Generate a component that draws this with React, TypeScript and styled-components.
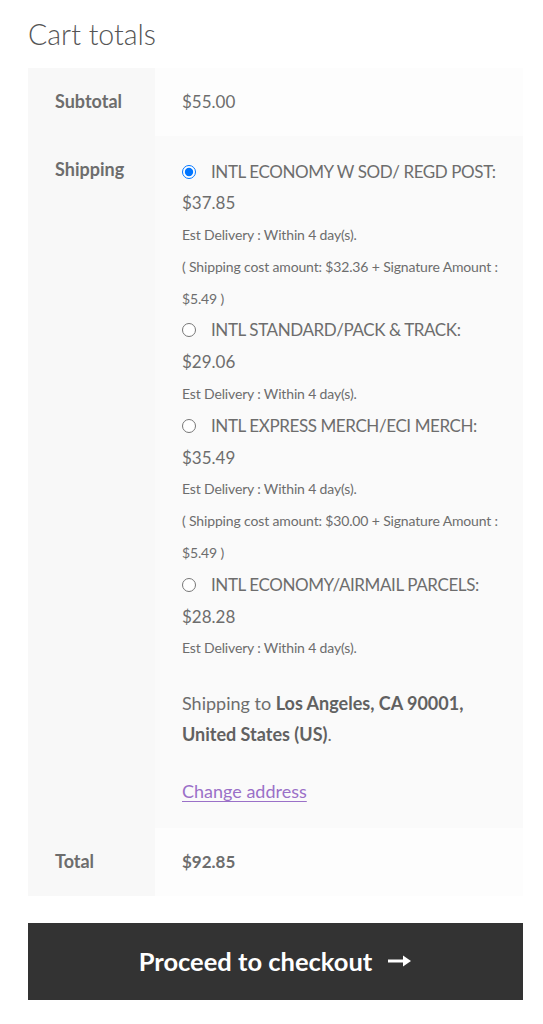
import React, { FC } from "react";
import styled, { createGlobalStyle } from "styled-components";

const GlobalStyle = createGlobalStyle`
  html, body {
    margin: 0;
    padding: 0;
    background: #fff;
  }
  body {
    font-family: Lato, "Noto Sans", "Liberation Sans", sans-serif;
    color: #6d6d6d;
  }
`;

const Wrapper = styled.div`
  width: 495px;
  padding: 15px 0 0 28px;
`;

const Heading = styled.h2`
  margin: 0 0 15px;
  font-size: 28.5px;
  font-weight: 300;
  line-height: 38px;
  color: #555;
`;

const Table = styled.table`
  width: 100%;
  border-collapse: collapse;
  border-spacing: 0;
  table-layout: fixed;
`;

const HeadCol = styled.col`
  width: 127px;
`;

const HeadCell = styled.th`
  padding: 20px 0 20px 27px;
  background: #f8f8f8;
  text-align: left;
  vertical-align: top;
  font-size: 18px;
  font-weight: 700;
  line-height: 27.5px;
  color: #6d6d6d;
`;

const ValueCell = styled.td<{ $shade?: boolean }>`
  padding: 20px 27px 20px 27px;
  background: ${(p) => (p.$shade ? "#fafafa" : "#fdfdfd")};
  vertical-align: top;
  font-size: 17px;
  line-height: 27.5px;
  color: #6d6d6d;
`;

const Amount = styled.span<{ $bold?: boolean }>`
  font-weight: ${(p) => (p.$bold ? 700 : 400)};
`;

const Methods = styled.ul`
  list-style: none;
  margin: 0 0 24px;
  padding: 0;
`;

const Method = styled.li`
  font-size: 17px;
  line-height: 31.8px;
`;

const Radio = styled.input`
  width: 14px;
  height: 14px;
  margin: 0 15px 0 0;
  vertical-align: -1px;
  accent-color: #0075ff;
`;

const Name = styled.label`
  white-space: nowrap;
  letter-spacing: -0.4px;
`;

const Price = styled.span`
  display: block;
`;

const Note = styled.p`
  margin: 0;
  font-size: 14px;
  letter-spacing: -0.15px;
  line-height: 31.8px;
  white-space: nowrap;
`;

const Destination = styled.p`
  margin: 0 0 26px;
  font-size: 18px;
  line-height: 31px;
  strong {
    font-weight: 700;
    color: #616161;
  }
`;

const ChangeLink = styled.a`
  font-size: 18px;
  line-height: 31.8px;
  color: #9a70c8;
  text-decoration: underline;
  text-underline-offset: 3px;
`;

const Checkout = styled.a`
  display: flex;
  align-items: center;
  justify-content: center;
  gap: 15px;
  margin-top: 27px;
  height: 77px;
  background: #333;
  color: #fff;
  font-size: 25.5px;
  font-weight: 700;
  text-decoration: none;
`;

type Option = {
  id: string;
  name: string;
  price: string;
  notes: React.ReactNode[];
  checked?: boolean;
};

const options: Option[] = [
  {
    id: "m1",
    name: "INTL ECONOMY W SOD/ REGD POST:",
    price: "$37.85",
    notes: [
      "Est Delivery : Within 4 day(s).",
      <>
        ( Shipping cost amount: $32.36 + Signature Amount :<br />
        $5.49 )
      </>,
    ],
    checked: true,
  },
  {
    id: "m2",
    name: "INTL STANDARD/PACK & TRACK:",
    price: "$29.06",
    notes: ["Est Delivery : Within 4 day(s)."],
  },
  {
    id: "m3",
    name: "INTL EXPRESS MERCH/ECI MERCH:",
    price: "$35.49",
    notes: [
      "Est Delivery : Within 4 day(s).",
      <>
        ( Shipping cost amount: $30.00 + Signature Amount :<br />
        $5.49 )
      </>,
    ],
  },
  {
    id: "m4",
    name: "INTL ECONOMY/AIRMAIL PARCELS:",
    price: "$28.28",
    notes: ["Est Delivery : Within 4 day(s)."],
  },
];

const Arrow: FC = () => (
  <svg width="25" height="14" viewBox="0 0 25 14" aria-hidden="true">
    <path d="M1 7h18" stroke="#fff" strokeWidth="3" />
    <path d="M16 1.5 24 7 16 12.5z" fill="#fff" />
  </svg>
);

const App: FC = () => {
  return (
    <>
      <GlobalStyle />
      <Wrapper>
        <Heading>Cart totals</Heading>
        <Table>
          <colgroup>
            <HeadCol />
            <col />
          </colgroup>
          <tbody>
            <tr>
              <HeadCell>Subtotal</HeadCell>
              <ValueCell>
                <Amount>$55.00</Amount>
              </ValueCell>
            </tr>
            <tr>
              <HeadCell>Shipping</HeadCell>
              <ValueCell $shade>
                <Methods>
                  {options.map((o) => (
                    <Method key={o.id}>
                      <Radio
                        type="radio"
                        name="shipping"
                        id={o.id}
                        defaultChecked={o.checked}
                      />
                      <Name htmlFor={o.id}>{o.name}</Name>
                      <Price>{o.price}</Price>
                      {o.notes.map((n, i) => (
                        <Note key={i}>{n}</Note>
                      ))}
                    </Method>
                  ))}
                </Methods>
                <Destination>
                  Shipping to <strong>Los Angeles, CA 90001, United States (US)</strong>.
                </Destination>
                <ChangeLink href="#">Change address</ChangeLink>
              </ValueCell>
            </tr>
            <tr>
              <HeadCell>Total</HeadCell>
              <ValueCell>
                <Amount $bold>$92.85</Amount>
              </ValueCell>
            </tr>
          </tbody>
        </Table>
        <Checkout href="#">
          Proceed to checkout
          <Arrow />
        </Checkout>
      </Wrapper>
    </>
  );
};

export default App;
